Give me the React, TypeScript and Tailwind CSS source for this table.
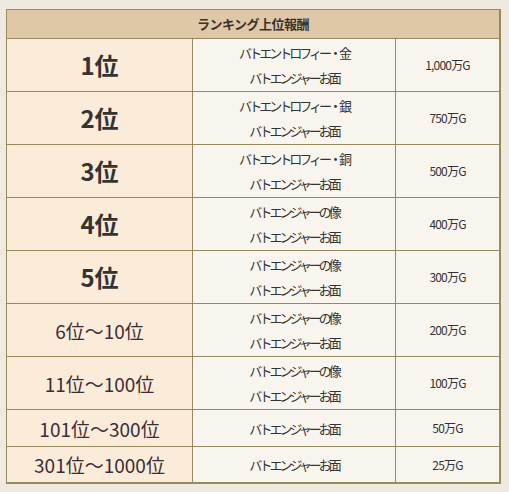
import React from "react";

type Row = { rank: string; big: boolean; items: string[]; prize: string; h: string };

const rows: Row[] = [
  { rank: "1位", big: true, items: ["バトエントロフィー・金", "バトエンジャーお面"], prize: "1,000万G", h: "h-[53px]" },
  { rank: "2位", big: true, items: ["バトエントロフィー・銀", "バトエンジャーお面"], prize: "750万G", h: "h-[53px]" },
  { rank: "3位", big: true, items: ["バトエントロフィー・銅", "バトエンジャーお面"], prize: "500万G", h: "h-[53px]" },
  { rank: "4位", big: true, items: ["バトエンジャーの像", "バトエンジャーお面"], prize: "400万G", h: "h-[53px]" },
  { rank: "5位", big: true, items: ["バトエンジャーの像", "バトエンジャーお面"], prize: "300万G", h: "h-[53px]" },
  { rank: "6位〜10位", big: false, items: ["バトエンジャーの像", "バトエンジャーお面"], prize: "200万G", h: "h-[53px]" },
  { rank: "11位〜100位", big: false, items: ["バトエンジャーの像", "バトエンジャーお面"], prize: "100万G", h: "h-[53px]" },
  { rank: "101位〜300位", big: false, items: ["バトエンジャーお面"], prize: "50万G", h: "h-[37px]" },
  { rank: "301位〜1000位", big: false, items: ["バトエンジャーお面"], prize: "25万G", h: "h-[35px]" },
];

export default function App() {
  return (
    <div
      className="w-[509px] h-[492px] bg-[#efe9e0] pt-[9px] pl-[6px]"
      style={{ fontFamily: '"Noto Sans CJK JP", "Noto Sans", sans-serif' }}
    >
      <div className="w-[495px] border-l border-t border-r-2 border-b-2 border-[#958b5f]">
        <div className="h-[29px] bg-[#dfc8a8] border-b border-[#958b5f] flex items-center justify-center text-[13px] font-bold text-[#3b302c] tracking-[-0.5px]">
          ランキング上位報酬
        </div>
        {rows.map((r, i) => (
          <div
            key={i}
            className={`grid grid-cols-[186px_203px_1fr] ${r.h} ${i < rows.length - 1 ? "border-b border-[#958b5f]" : ""}`}
          >
            <div className="bg-[#faecd9] border-r border-[#958b5f] flex items-center justify-center">
              {r.big ? (
                <span className="text-[24px] font-bold text-[#333333] leading-none">{r.rank}</span>
              ) : (
                <span className="text-[19px] text-[#3d2c38] leading-none">{r.rank}</span>
              )}
            </div>
            <div className="bg-[#f8f5ee] border-r border-[#958b5f] flex flex-col items-center justify-center text-[13px] leading-[25px] text-[#333333] tracking-[-3px]">
              {r.items.map((t, j) => (
                <div key={j}>{t}</div>
              ))}
            </div>
            <div className="bg-[#f8f5ee] flex items-center justify-center text-[12px] text-[#333333] tracking-[-0.8px]">
              {r.prize}
            </div>
          </div>
        ))}
      </div>
    </div>
  );
}
